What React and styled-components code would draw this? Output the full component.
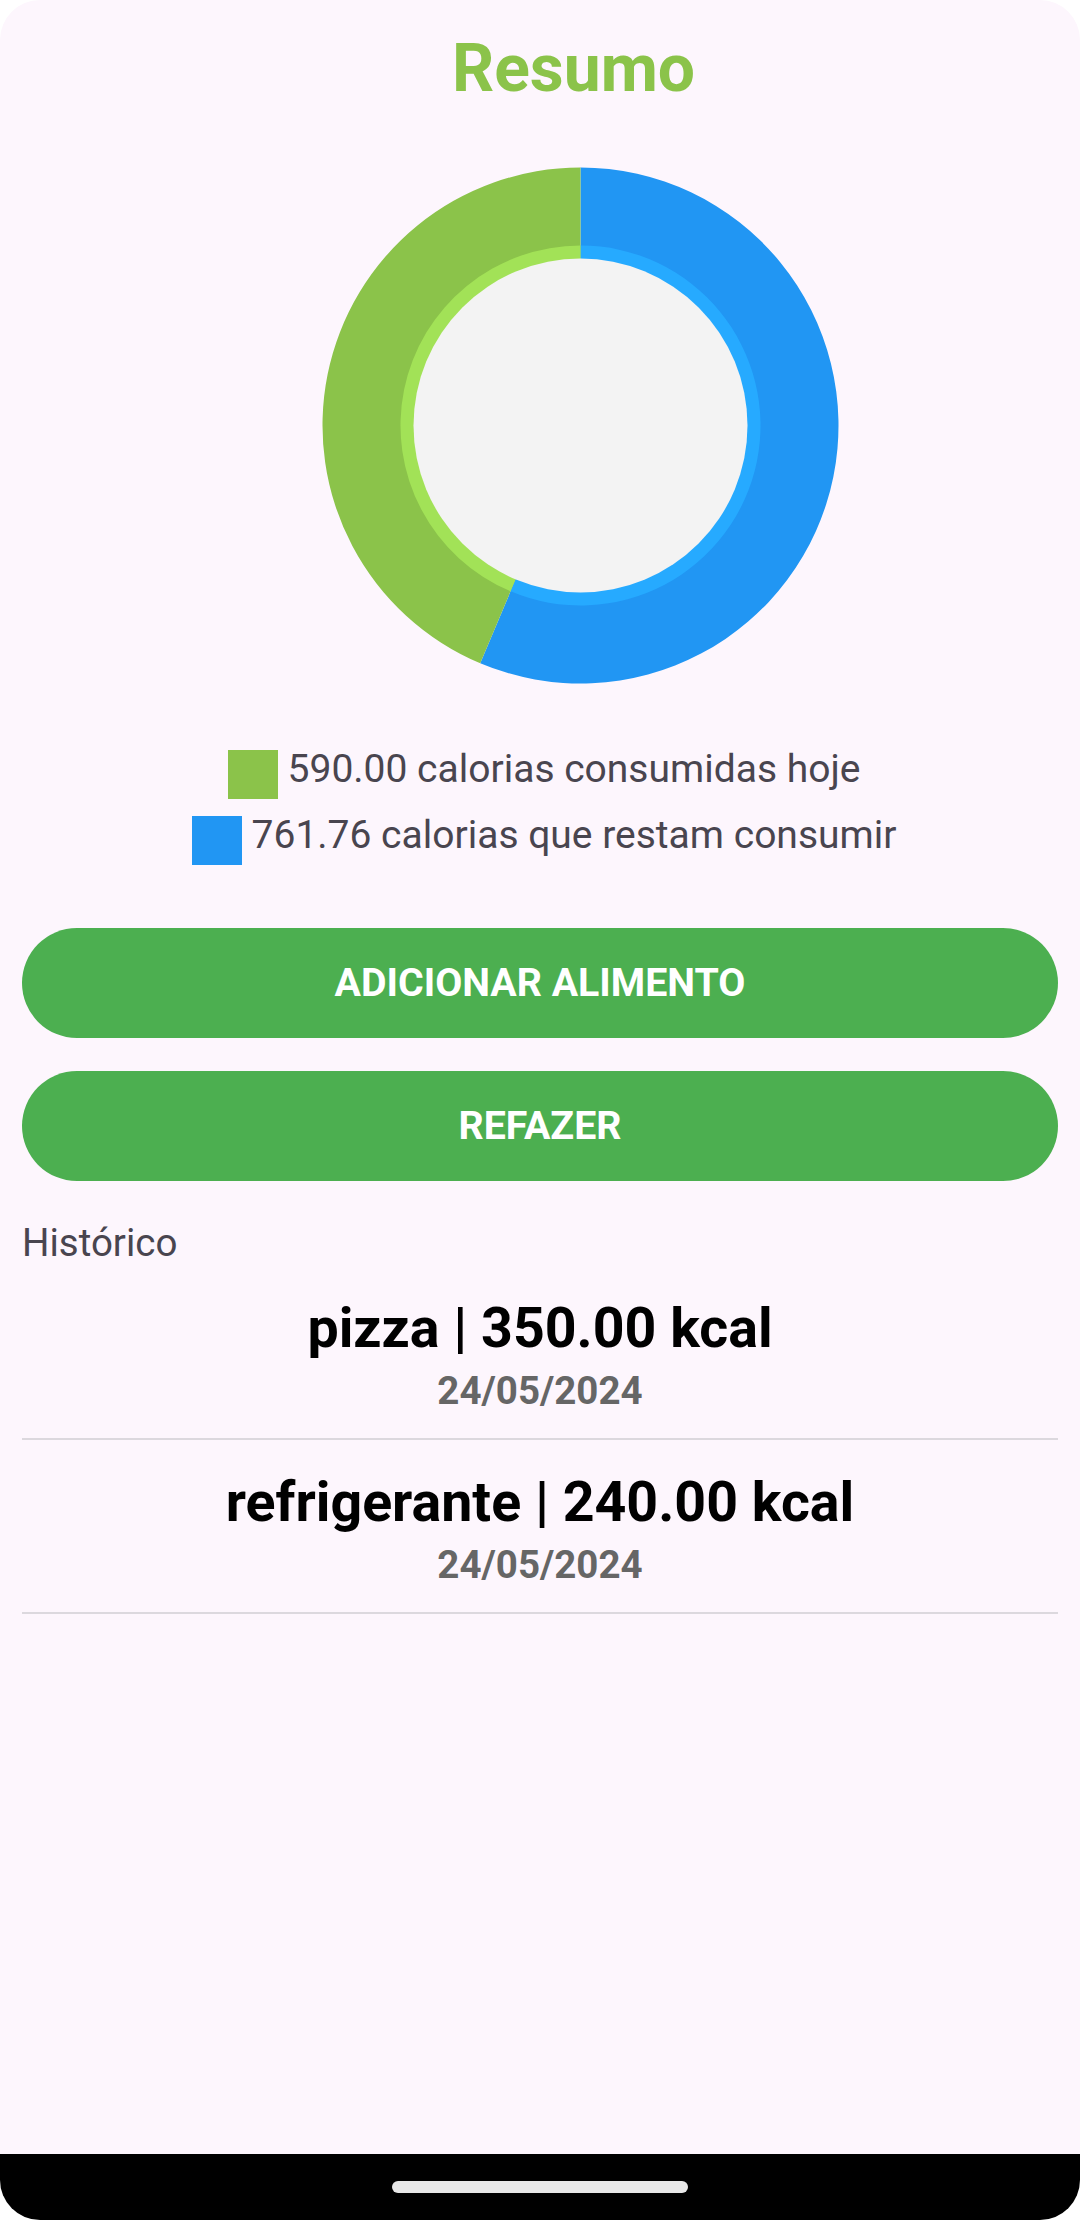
import React from 'react';
import styled, { createGlobalStyle } from 'styled-components';

const GlobalStyle = createGlobalStyle`
  html, body {
    margin: 0;
    padding: 0;
    background: #ffffff;
  }
  body {
    font-family: Roboto, 'Noto Sans', sans-serif;
  }
`;

const consumed = 590.0;
const remaining = 761.76;

const history = [
  { name: 'pizza', kcal: 350.0, date: '24/05/2024' },
  { name: 'refrigerante', kcal: 240.0, date: '24/05/2024' },
];

const SIZE = 517;
const C = SIZE / 2;
const OUTER = 258;
const RING = 180;
const HOLE = 167;

function point(r, deg) {
  const rad = (deg * Math.PI) / 180;
  return [C + r * Math.sin(rad), C - r * Math.cos(rad)];
}

function wedge(r, from, to) {
  const [x1, y1] = point(r, from);
  const [x2, y2] = point(r, to);
  const large = to - from > 180 ? 1 : 0;
  return `M ${C} ${C} L ${x1} ${y1} A ${r} ${r} 0 ${large} 1 ${x2} ${y2} Z`;
}

function DonutChart() {
  const total = consumed + remaining;
  const split = (remaining / total) * 360;

  return (
    <svg width={SIZE} height={SIZE} viewBox={`0 0 ${SIZE} ${SIZE}`}>
      <path d={wedge(OUTER, 0, split)} fill="#2196f3" />
      <path d={wedge(OUTER, split, 360)} fill="#8bc34a" />
      <path d={wedge(RING, 0, split)} fill="#26aaff" />
      <path d={wedge(RING, split, 360)} fill="#a2e257" />
      <circle cx={C} cy={C} r={HOLE} fill="#f3f3f3" />
    </svg>
  );
}

export default function App() {
  return (
    <>
      <GlobalStyle />
      <Screen>
        <Content>
          <Title>Resumo</Title>

          <ChartArea>
            <DonutChart />
          </ChartArea>

          <Legend>
            <LegendRow>
              <Swatch color="#8bc34a" />
              <LegendText>{consumed.toFixed(2)} calorias consumidas hoje</LegendText>
            </LegendRow>
            <LegendRow>
              <Swatch color="#2196f3" />
              <LegendText>{remaining.toFixed(2)} calorias que restam consumir</LegendText>
            </LegendRow>
          </Legend>

          <Actions>
            <PillButton>ADICIONAR ALIMENTO</PillButton>
            <PillButton>REFAZER</PillButton>
          </Actions>

          <SectionLabel>Histórico</SectionLabel>

          <HistoryList>
            {history.map((item, i) => (
              <HistoryItem key={i}>
                <ItemTitle>
                  {item.name} | {item.kcal.toFixed(2)} kcal
                </ItemTitle>
                <ItemDate>{item.date}</ItemDate>
              </HistoryItem>
            ))}
          </HistoryList>
        </Content>

        <NavBar>
          <Handle />
        </NavBar>
      </Screen>
    </>
  );
}

const Screen = styled.div`
  width: 1080px;
  height: 2220px;
  border-radius: 40px;
  overflow: hidden;
  display: flex;
  flex-direction: column;
`;

const Content = styled.div`
  flex: 1;
  background: #fdf6fd;
  padding: 36px 22px 0;
  display: flex;
  flex-direction: column;
`;

const Title = styled.h1`
  margin: 0;
  padding-left: 67px;
  font-size: 66px;
  line-height: 66px;
  font-weight: 700;
  color: #8bc34a;
  text-align: center;
`;

const ChartArea = styled.div`
  display: flex;
  justify-content: center;
  padding-left: 80px;
  margin-top: 65px;

  svg {
    display: block;
  }
`;

const Legend = styled.div`
  margin-top: 57px;
  padding-left: 8px;
  display: flex;
  flex-direction: column;
  align-items: center;
`;

const LegendRow = styled.div`
  display: flex;
  align-items: center;
  gap: 10px;
  height: 66px;
`;

const Swatch = styled.span`
  width: 50px;
  height: 49px;
  background: ${(p) => p.color};
`;

const LegendText = styled.span`
  font-size: 39px;
  line-height: 45px;
  color: #49454f;
  margin-bottom: 9px;
`;

const Actions = styled.div`
  margin-top: 55px;
  display: flex;
  flex-direction: column;
  gap: 33px;
`;

const PillButton = styled.button`
  height: 110px;
  border: none;
  border-radius: 55px;
  background: #4caf50;
  color: #ffffff;
  font-family: Roboto, sans-serif;
  font-size: 39.3px;
  font-weight: 700;
  cursor: pointer;
`;

const SectionLabel = styled.div`
  margin-top: 39px;
  font-size: 38.5px;
  line-height: 45.6px;
  color: #49454f;
`;

const HistoryList = styled.div`
  display: flex;
  flex-direction: column;
`;

const HistoryItem = styled.div`
  padding: 30px 0 25px;
  border-bottom: 2px solid #dcd8de;
  display: flex;
  flex-direction: column;
  align-items: center;
`;

const ItemTitle = styled.div`
  font-size: 55.5px;
  line-height: 65px;
  font-weight: 700;
  color: #000000;
`;

const ItemDate = styled.div`
  margin-top: 7px;
  font-size: 38.5px;
  line-height: 45px;
  font-weight: 700;
  color: #666666;
`;

const NavBar = styled.div`
  height: 66px;
  background: #000000;
  display: flex;
  justify-content: center;
  padding-top: 27px;
  box-sizing: border-box;
`;

const Handle = styled.div`
  width: 296px;
  height: 12px;
  border-radius: 6px;
  background: #e8e8e8;
`;
